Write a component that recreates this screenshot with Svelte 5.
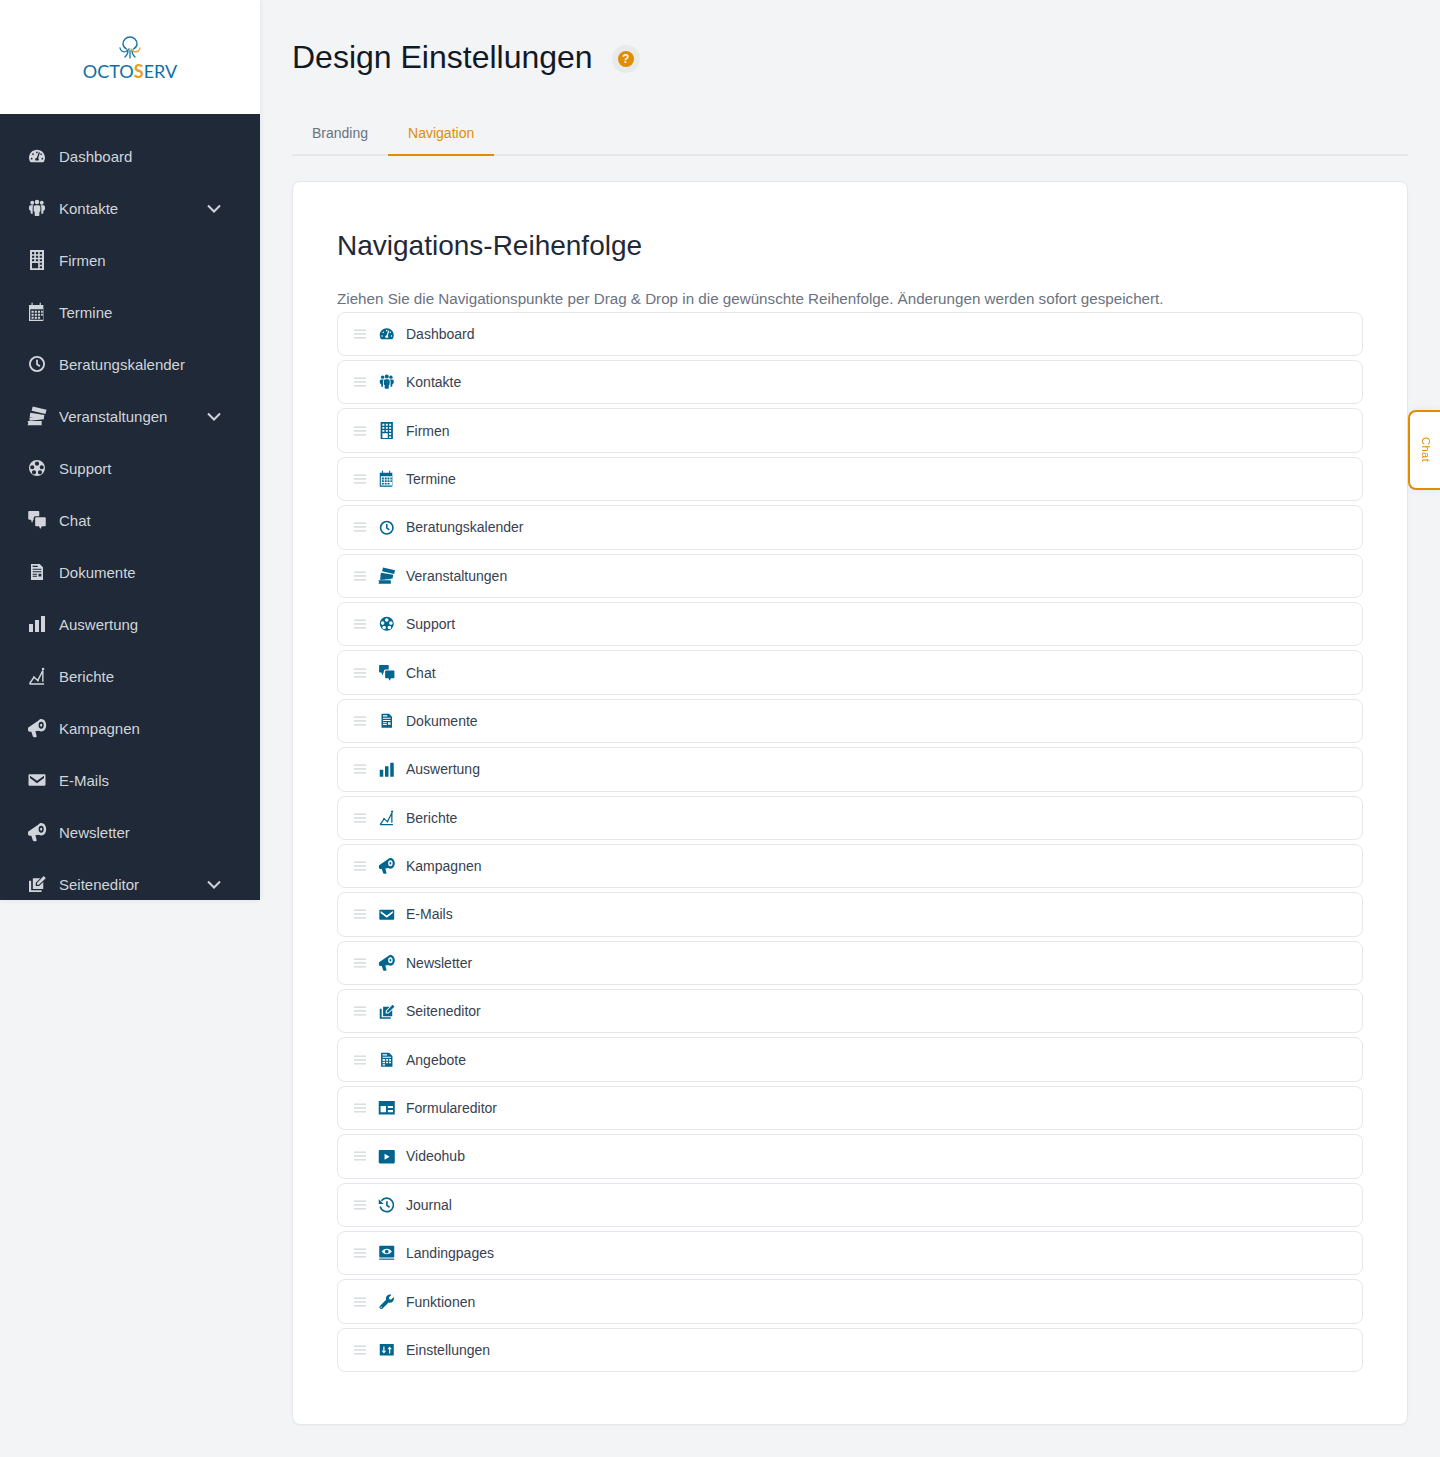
<script>
  const icons = {
    dashboard: `<svg viewBox="-72 -104 720 720"><path fill="currentColor" d="M288 32C128.94 32 0 160.94 0 320c0 52.8 14.25 102.26 39.06 144.8 5.61 9.62 16.3 15.2 27.44 15.2h443c11.14 0 21.83-5.58 27.44-15.2C561.75 422.26 576 372.8 576 320c0-159.06-128.94-288-288-288zm0 64c14.71 0 26.58 10.13 30.32 23.65-1.11 2.26-2.64 4.23-3.45 6.67l-9.22 27.67c-5.13 3.49-10.97 6.01-17.64 6.01-17.67 0-32-14.33-32-32S270.33 96 288 96zM96 384c-17.67 0-32-14.33-32-32s14.33-32 32-32 32 14.33 32 32-14.33 32-32 32zm48-160c-17.67 0-32-14.33-32-32s14.33-32 32-32 32 14.33 32 32-14.33 32-32 32zm246.77-72.41l-61.33 184C343.13 347.33 352 364.54 352 384c0 11.72-3.38 22.55-8.88 32H232.88c-5.5-9.45-8.88-20.28-8.88-32 0-33.94 26.5-61.43 59.9-63.59l61.34-184.01c4.17-12.56 17.73-19.45 30.36-15.17 12.57 4.19 19.35 17.79 15.17 30.36zm14.66 57.2l15.52-46.55c3.47-1.29 7.13-2.23 11.05-2.23 17.67 0 32 14.33 32 32s-14.33 32-32 32c-11.38-.01-20.89-6.28-26.57-15.22zM480 384c-17.67 0-32-14.33-32-32s14.33-32 32-32 32 14.33 32 32-14.33 32-32 32z"/></svg>`,
    kontakte: `<svg viewBox="0 0 24 24" fill="currentColor"><circle cx="6.300" cy="5.700" r="2.300"/><circle cx="12" cy="4.800" r="2.700"/><circle cx="17.700" cy="5.700" r="2.300"/><path d="M4.300 8.800h3.500c-.7.9-1 1.900-1 3v5.700c0 .6.100 1 .3 1.500H5.300c-.5 0-.9-.4-.9-.9v-2.400L3 14.500c-.4-.5-.6-1-.6-1.500v-1.700c0-1.400.9-2.500 1.900-2.500z"/><path d="M19.700 8.800h-3.500c.7.900 1 1.900 1 3v5.700c0 .6-.1 1-.3 1.500h1.800c.5 0 .9-.4.900-.9v-2.400l1.400-1.200c.4-.5.600-1 .6-1.500v-1.700c0-1.400-.9-2.500-1.900-2.500z"/><path d="M10.200 8.600h3.600c1.300 0 2.200 1 2.200 2.300v4.300c0 .8-.5 1.300-1.200 1.700v3.700c0 .6-.4 1-1 1h-3.600c-.6 0-1-.4-1-1v-3.700c-.7-.4-1.200-.9-1.200-1.700v-4.300c0-1.300.9-2.300 2.200-2.300z"/></svg>`,
    firmen: `<svg viewBox="0 0 24 24"><path fill="currentColor" fill-rule="evenodd" d="M3.600 0h16.800v24H3.600zM6 2.500V5h2.700V2.500zm4.700 0V5h2.700V2.500zm4.600 0V5H18V2.500zM6 6.800v2.500h2.700V6.800zm4.700 0v2.500h2.700V6.800zm4.600 0v2.500H18V6.800zM6 11v2.500h2.700V11zm4.700 0v2.500h2.700V11zm4.600 0v2.500H18V11zM15.300 15.200v2.500H18v-2.500zM15.300 19.400v2.500H18v-2.500zM6 15.500v6.400h7.400v-6.400z"/></svg>`,
    termine: `<svg viewBox="0 0 24 24"><path fill="currentColor" fill-rule="evenodd" d="M2.400 3.600h3V1.500c0-.5.300-.8.700-.8s.7.300.7.800v2.100h8.400V1.500c0-.5.300-.8.700-.8s.7.300.7.800v2.100h3v19.200H2.400zM3.900 8.600v12.700h16.200V8.600zM5.400 10.400h2.600V13H5.400zm3.900 0h2.600V13H9.300zm3.800 0h2.600V13h-2.600zm3.900 0h2V13h-2zM5.400 14.100h2.600v2.500H5.400zm3.900 0h2.600v2.500H9.300zm3.800 0h2.600v2.500h-2.600zm3.900 0h2v2.500h-2zM5.400 17.700h2.600v2.300H5.400zm3.900 0h2.600v2.300H9.300zm3.800 0h2.600v2.300h-2.600z"/></svg>`,
    clock: `<svg viewBox="0 0 24 24" fill="none" stroke="currentColor"><circle cx="12" cy="12" r="8.500" stroke-width="2.200"/><path d="M12 7v5.300l3.500 2.500" stroke-width="2.100"/></svg>`,
    tickets: `<svg viewBox="0 0 24 24" fill="currentColor"><rect x="6" y="2.300" width="17" height="5.400" transform="rotate(13 14 5)"/><rect x="3.500" y="9.300" width="17" height="5.600" transform="rotate(9 12 12)"/><rect x="3" y="13.300" width="14.500" height="3.800" transform="rotate(-6 10 15)"/><path d="M0.600 18h17v5H.6l1-2.500z"/></svg>`,
    support: `<svg viewBox="0 0 24 24"><path fill="currentColor" fill-rule="evenodd" d="M12 2.400a9.600 9.600 0 1 1 0 19.200 9.600 9.600 0 0 1 0-19.200zM12 4.300a2.500 2.500 0 1 0 0 5 2.500 2.500 0 0 0 0-5zM6.300 8.600a2.500 2.500 0 1 0 0 5 2.500 2.500 0 0 0 0-5zM17.700 8.600a2.500 2.500 0 1 0 0 5 2.500 2.500 0 0 0 0-5zM8.400 14.700a2.500 2.500 0 1 0 0 5 2.500 2.500 0 0 0 0-5zM15.600 14.700a2.500 2.500 0 1 0 0 5 2.500 2.500 0 0 0 0-5z"/></svg>`,
    chat: `<svg viewBox="0 0 24 24" fill="currentColor"><path d="M2.500 1.200H13.700c.6 0 1 .4 1 1V7.400H10.300C8.900 7.400 8 8.400 8 9.800V11.600H7.500L6 15.600 4.800 11.600H2.500c-.6 0-1-.4-1-1V2.200c0-.6.4-1 1-1z"/><path d="M10.800 8.800H21.500c.6 0 1 .4 1 1V18.600c0 .6-.4 1-1 1H18L15.800 22.800 14.500 19.600H10.800c-.6 0-1-.4-1-1V9.800c0-.6.4-1 1-1z"/></svg>`,
    doc: `<svg viewBox="0 0 24 24"><path fill="currentColor" fill-rule="evenodd" d="M4.800 2.400h10.400l4 4v15.200H4.800zM6.800 4.600v1.500h6V4.600zM6.800 8v1.300h10.400V8zm0 3v1.300h10.400V11zm0 3v1.300h5.200V14zm7 0v3.500h3.400V14zM6.800 16.500v1.200h5.200v-1.200z"/></svg>`,
    bars: `<svg viewBox="0 0 24 24" fill="currentColor"><path d="M2.400 12h4.800v9.600H2.400zM9.600 7.200h4.800v14.400H9.600zM16.800 2.400h4.800v19.200h-4.800z"/></svg>`,
    report: `<svg viewBox="0 0 24 24" fill="none" stroke="currentColor" stroke-width="1.700"><path d="M3 21.500h17.500M3 21.300l5.300-7.800 4.700 3.800L19 5.500V19"/><circle cx="19.300" cy="3.600" r="1.500" fill="currentColor" stroke="none"/><circle cx="8.300" cy="13.500" r="1.200" fill="currentColor" stroke="none"/><circle cx="13" cy="17.300" r="1.200" fill="currentColor" stroke="none"/></svg>`,
    horn: `<svg viewBox="0 0 24 24"><path fill="currentColor" fill-rule="evenodd" d="M2 11 13.500 3.200C14.500 2 15.800 1.200 17 1.200 20.600 1.200 23 4.600 23 8.700S20.600 16.200 17 16.200C16 16.200 15 15.800 14.200 15.200L10 15.800 11.600 21.600C11.800 22.400 11.300 23 10.500 23H8.200C7.600 23 7.200 22.600 7 22L5.200 16.400 3.500 16.600C2.200 16.700 1.200 15.800 1.200 14.500V12.500C1.200 11.900 1.500 11.400 2 11zM17 4.600A3.100 4.100 0 1 0 17 12.800 3.100 4.100 0 1 0 17 4.600zM17 7A1.300 1.700 0 1 1 17 10.400 1.300 1.700 0 1 1 17 7z"/></svg>`,
    mail: `<svg viewBox="0 0 24 24"><path fill="currentColor" fill-rule="evenodd" d="M2.800 5.200h18.400c.6 0 1 .4 1 1v11.600c0 .6-.4 1-1 1H2.800c-.6 0-1-.4-1-1V6.200c0-.6.4-1 1-1zM3.600 6.800L12 13l8.400-6.200v2.900L12 16 3.600 9.700z"/></svg>`,
    editor: `<svg viewBox="0 0 24 24"><path fill="currentColor" d="M7 5H16L10.500 10.500V14.500H14.500L19.500 9.500V18H7z"/><path fill="currentColor" d="M2.400 8H5V19.500H17.500V21.600H2.400z"/><path fill="currentColor" d="M12 13V10.800L20 2.400 22.600 5 14.200 13z"/></svg>`,
    offer: `<svg viewBox="0 0 24 24"><path fill="currentColor" fill-rule="evenodd" d="M4.200 2.400h11l4.600 4.600v14.600H4.200zM6.200 4.600v1.500h6.300V4.600zM6.200 8v1.300h11.600V8zM6.200 11v2.200h3.600V11zm5 0v2.200h2.600V11zm4 0v2.200h2.600V11zM6.200 14.600v2.200h3.600v-2.200zm5 0v2.200h2.600v-2.200zm4 0v2.200h2.600v-2.200zM6.200 18.200v1.700h3.600v-1.700z"/></svg>`,
    form: `<svg viewBox="0 0 24 24"><path fill="currentColor" fill-rule="evenodd" d="M1 2.600h22v18.800H1zM3.500 9.500v8.500h7.500V9.500zM13.500 9.500v3h7v-3zm0 5.500v3h7v-3z"/></svg>`,
    video: `<svg viewBox="0 0 24 24"><path fill="currentColor" fill-rule="evenodd" d="M2.500 2.900h19c.9 0 1.500.7 1.500 1.500v15.200c0 .8-.6 1.500-1.500 1.500h-19c-.9 0-1.500-.7-1.500-1.500V4.400c0-.8.6-1.500 1.500-1.500zM9 8v8l7-4z"/></svg>`,
    history: `<svg viewBox="0 0 24 24" fill="none" stroke="currentColor"><path d="M4.700 6.500A9.200 9.200 0 1 1 3 14.500" stroke-width="2.300"/><path d="M1 4.300l6.800 6.800H1z" fill="currentColor" stroke="none"/><path d="M12.200 7.300v5.500l3.700 2.600" stroke-width="2.200"/></svg>`,
    screen: `<svg viewBox="0 0 24 24"><path fill="currentColor" fill-rule="evenodd" d="M2.700 2.400h18.600c.6 0 1 .4 1 1v14c0 .6-.4 1-1 1H2.700c-.6 0-1-.4-1-1v-14c0-.6.4-1 1-1zM12 6.600c-3 0-5.500 1.800-7 3.800 1.500 2 4 3.800 7 3.800s5.500-1.800 7-3.800c-1.500-2-4-3.800-7-3.800zm0 1.200a2.600 2.600 0 1 1 0 5.200 2.600 2.600 0 0 1 0-5.200z"/><path fill="currentColor" d="M1.700 20h20.600v1.600H1.700z"/></svg>`,
    wrench: `<svg viewBox="-52 -52 617 617"><path fill="currentColor" d="M507.730 109.100c-2.240-9.030-13.540-12.090-20.120-5.510l-74.360 74.360-67.880-11.310-11.310-67.880 74.360-74.360c6.620-6.620 3.430-17.900-5.660-20.160-47.380-11.740-99.550.91-136.580 37.930-39.640 39.640-50.550 97.100-34.050 147.200L18.740 402.760c-24.990 24.990-24.990 65.510 0 90.500 24.990 24.990 65.510 24.990 90.500 0l213.210-213.210c50.120 16.710 107.470 5.680 147.370-34.220 37.070-37.070 49.700-89.320 37.910-136.730zM64 472c-13.250 0-24-10.750-24-24 0-13.260 10.750-24 24-24s24 10.740 24 24c0 13.250-10.750 24-24 24z"/></svg>`,
    settings: `<svg viewBox="0 0 24 24"><path fill="currentColor" fill-rule="evenodd" d="M2.400 4h19.200v16H2.400zM7.300 7.500v6H5l3.100 3.800 3.100-3.800H8.900v-6zM16 7.500l-3.100 3.800h2.200v6h1.700v-6H19z"/></svg>`
  };

  const nav = [
    { label: 'Dashboard', icon: 'dashboard' },
    { label: 'Kontakte', icon: 'kontakte', sub: true },
    { label: 'Firmen', icon: 'firmen' },
    { label: 'Termine', icon: 'termine' },
    { label: 'Beratungskalender', icon: 'clock' },
    { label: 'Veranstaltungen', icon: 'tickets', sub: true },
    { label: 'Support', icon: 'support' },
    { label: 'Chat', icon: 'chat' },
    { label: 'Dokumente', icon: 'doc' },
    { label: 'Auswertung', icon: 'bars' },
    { label: 'Berichte', icon: 'report' },
    { label: 'Kampagnen', icon: 'horn' },
    { label: 'E-Mails', icon: 'mail' },
    { label: 'Newsletter', icon: 'horn' },
    { label: 'Seiteneditor', icon: 'editor', sub: true },
    { label: 'Angebote', icon: 'offer' },
    { label: 'Formulareditor', icon: 'form' },
    { label: 'Videohub', icon: 'video' },
    { label: 'Journal', icon: 'history' },
    { label: 'Landingpages', icon: 'screen' },
    { label: 'Funktionen', icon: 'wrench' },
    { label: 'Einstellungen', icon: 'settings' }
  ];
  const sideNav = nav.slice(0, 15);
</script>

<div class="page">
  <aside class="sidebar">
    <div class="brand">
      <svg class="octo" viewBox="0 0 24 24" fill="none" stroke-linecap="round">
        <path d="M8.500 13C6 11.500 5 9.500 5 8a7 7 0 0 1 14 0c0 1.500-1 3.500-3.500 5" stroke="#1474a5" stroke-width="1.400"/>
        <path d="M2 12c.5 3 3 4.600 6 3.500l3-2.500M10 14.500c0 2.500-1 4.800-3 6.500M12 14.500V22M14 14.500c0 2.500 1 4.800 3 6.500" stroke="#1474a5" stroke-width="1.300"/>
        <path d="M22 12c-.5 3-3 4.600-6 3.500l-3-2.500" stroke="#e8a020" stroke-width="1.400"/>
      </svg>
      <div class="wordmark">OCTO<span>S</span>ERV</div>
    </div>
    <nav class="menu">
      {#each sideNav as item}
        <div class="menu-item">
          <span class="ico">{@html icons[item.icon]}</span>
          <span class="menu-label">{item.label}</span>
          {#if item.sub}
            <svg class="chev" viewBox="0 0 14 9" fill="none" stroke="currentColor" stroke-width="2"><path d="M1 1.500l6 6 6-6"/></svg>
          {/if}
        </div>
      {/each}
    </nav>
  </aside>

  <main class="main">
    <header class="head">
      <h1>Design Einstellungen</h1>
      <span class="help"><span class="help-dot">?</span></span>
    </header>

    <div class="tabs">
      <div class="tab">Branding</div>
      <div class="tab active">Navigation</div>
    </div>

    <section class="card">
      <h2>Navigations-Reihenfolge</h2>
      <p class="desc">Ziehen Sie die Navigationspunkte per Drag &amp; Drop in die gewünschte Reihenfolge. Änderungen werden sofort gespeichert.</p>
      <ul class="rows">
        {#each nav as item}
          <li class="row">
            <svg class="handle" viewBox="0 0 12 10" fill="#d1d5db"><rect y="0.500" width="12" height="1.300"/><rect y="4.300" width="12" height="1.300"/><rect y="8.200" width="12" height="1.300"/></svg>
            <span class="ico teal">{@html icons[item.icon]}</span>
            <span class="row-label">{item.label}</span>
          </li>
        {/each}
      </ul>
    </section>
  </main>

  <aside class="chat-tab"><span>Chat</span></aside>
</div>

<style>
  :global(body) {
    margin: 0;
    background: #f3f4f6;
    font-family: "Liberation Sans", Arial, sans-serif;
  }
  .page {
    display: flex;
    align-items: flex-start;
    min-height: 1457px;
  }
  .sidebar {
    width: 260px;
    height: 900px;
    flex: none;
    overflow: hidden;
    background: #1f2937;
    box-shadow: 0 0 6px rgba(0, 0, 0, 0.08);
  }
  .brand {
    height: 114px;
    background: #fff;
    display: flex;
    flex-direction: column;
    align-items: center;
    padding-top: 36px;
    box-sizing: border-box;
  }
  .octo {
    width: 24px;
    height: 24px;
    display: block;
  }
  .wordmark {
    font-family: Lato, "Liberation Sans", sans-serif;
    font-weight: 400;
    font-size: 18px;
    line-height: 18px;
    margin-top: 1.500px;
    color: #0f6fa3;
  }
  .wordmark span {
    color: #e8a020;
    font-weight: 700;
  }
  .menu {
    padding-top: 16px;
  }
  .menu-item {
    height: 52px;
    display: flex;
    align-items: center;
    padding: 0 39px 0 27px;
    gap: 12px;
    color: #d1d5db;
    font-size: 15px;
  }
  .menu-label {
    flex: 1;
  }
  .chev {
    width: 14px;
    height: 9px;
    flex: none;
  }
  .ico {
    width: 20px;
    height: 20px;
    flex: none;
    display: flex;
    align-items: center;
    justify-content: center;
  }
  .ico :global(svg) {
    display: block;
    width: 20px;
    height: 20px;
  }
  .teal {
    color: #00658f;
  }
  .teal :global(svg) {
    width: 17.500px;
    height: 17.500px;
  }
  .main {
    flex: 1;
    min-width: 0;
    padding: 37px 32px 33px;
  }
  .head {
    display: flex;
    align-items: center;
    gap: 19px;
    height: 40px;
  }
  h1 {
    margin: 0;
    font-size: 32px;
    font-weight: 400;
    line-height: 40px;
    color: #111827;
  }
  .help {
    width: 28px;
    height: 28px;
    margin-top: 4px;
    border-radius: 50%;
    background: #e9eaec;
    display: flex;
    align-items: center;
    justify-content: center;
  }
  .help-dot {
    width: 16px;
    height: 16px;
    border-radius: 50%;
    background: #e08e00;
    color: #f3f4f6;
    font-size: 12px;
    font-weight: 700;
    line-height: 16px;
    text-align: center;
  }
  .tabs {
    display: flex;
    margin-top: 34px;
    border-bottom: 2px solid #e5e7eb;
  }
  .tab {
    padding: 12px 20px 11px;
    margin-bottom: -2px;
    border-bottom: 2px solid transparent;
    font-size: 14px;
    line-height: 20px;
    color: #6b7280;
  }
  .tab.active {
    color: #e08e00;
    border-bottom-color: #e08e00;
  }
  .card {
    margin-top: 25px;
    background: #fff;
    border: 1px solid #e5e7eb;
    border-radius: 8px;
    padding: 44px;
    box-shadow: 0 1px 2px rgba(0, 0, 0, 0.03);
  }
  h2 {
    margin: 0;
    font-size: 28px;
    font-weight: 400;
    line-height: 40px;
    color: #1f2937;
  }
  .desc {
    margin: 23px 0 2.600px;
    font-size: 15.200px;
    line-height: 20px;
    color: #6b7280;
  }
  .rows {
    list-style: none;
    margin: 0 0 7.700px;
    padding: 0;
    display: flex;
    flex-direction: column;
    gap: 4px;
  }
  .row {
    height: 44.400px;
    box-sizing: border-box;
    border: 1px solid #e5e7eb;
    border-radius: 8px;
    background: #fff;
    display: flex;
    align-items: center;
    padding-left: 16px;
    font-size: 14px;
    color: #374151;
  }
  .handle {
    width: 12px;
    height: 10px;
    flex: none;
    margin-right: 11px;
  }
  .row-label {
    margin-left: 9px;
  }
  .chat-tab {
    position: fixed;
    top: 410px;
    right: 0;
    width: 32px;
    height: 80px;
    box-sizing: border-box;
    padding-left: 2px;
    background: #fff;
    border: 2px solid #e08e00;
    border-right: 0;
    border-radius: 8px 0 0 8px;
    box-shadow: 0 0 8px rgba(0, 0, 0, 0.06);
    display: flex;
    align-items: center;
    justify-content: center;
  }
  .chat-tab span {
    writing-mode: vertical-rl;
    font-size: 11px;
    letter-spacing: 0.5px;
    color: #e08e00;
  }
</style>
